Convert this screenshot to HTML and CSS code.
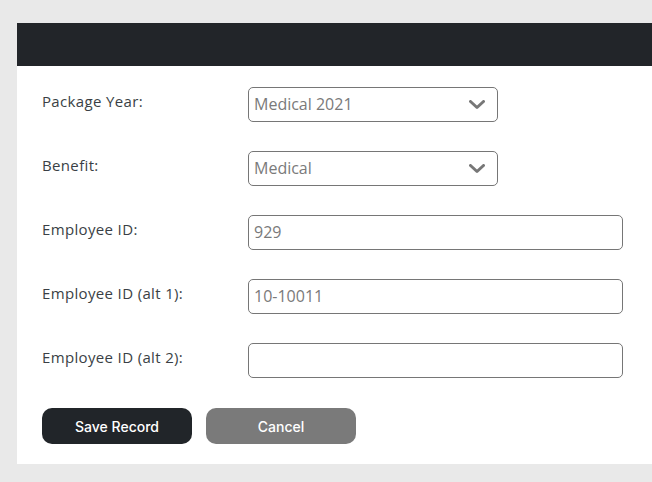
FILE: index.html
```html
<!DOCTYPE html>
<html>
<head>
<meta charset="utf-8">
<link rel="stylesheet" href="styles.css">
</head>
<body>
<div class="panel">
  <div class="panel-header"></div>
  <form class="form">
    <div class="row">
      <label class="label">Package Year:</label>
      <div class="select">
        <span class="value">Medical 2021</span>
        <svg class="chevron" width="16" height="10" viewBox="0 0 16 10"><polyline points="1.5,1.5 8,7.5 14.5,1.5" fill="none" stroke="#777" stroke-width="3" stroke-linecap="round" stroke-linejoin="round"/></svg>
      </div>
    </div>
    <div class="row">
      <label class="label">Benefit:</label>
      <div class="select">
        <span class="value">Medical</span>
        <svg class="chevron" width="16" height="10" viewBox="0 0 16 10"><polyline points="1.5,1.5 8,7.5 14.5,1.5" fill="none" stroke="#777" stroke-width="3" stroke-linecap="round" stroke-linejoin="round"/></svg>
      </div>
    </div>
    <div class="row">
      <label class="label">Employee ID:</label>
      <div class="input"><span class="value">929</span></div>
    </div>
    <div class="row">
      <label class="label">Employee ID (alt 1):</label>
      <div class="input"><span class="value">10-10011</span></div>
    </div>
    <div class="row">
      <label class="label">Employee ID (alt 2):</label>
      <div class="input"><span class="value"></span></div>
    </div>
    <div class="actions">
      <button type="button" class="btn btn-primary">Save Record</button>
      <button type="button" class="btn btn-secondary">Cancel</button>
    </div>
  </form>
</div>
</body>
</html>
```
FILE: styles.css
```css
html, body {
  margin: 0;
  padding: 0;
}
body {
  background: #e9e9e9;
  padding: 23px 0 0 17px;
  height: 482px;
  box-sizing: border-box;
  overflow: hidden;
  font-family: "Open Sans", "Liberation Sans", sans-serif;
}
.panel {
  background: #fff;
  height: 441px;
}
.panel-header {
  background: #222529;
  height: 43px;
}
.form {
  padding: 21px 0 0 25px;
  display: flex;
  flex-direction: column;
  gap: 30px;
}
.row {
  display: flex;
  align-items: flex-start;
  height: 34px;
}
.label {
  width: 206px;
  flex: none;
  font-size: 15px;
  line-height: 20px;
  letter-spacing: 0.35px;
  padding-top: 4px;
  color: #3a3f45;
}
.select, .input {
  box-sizing: border-box;
  height: 35px;
  border: 1px solid #767676;
  border-radius: 5px;
  display: flex;
  align-items: center;
  justify-content: space-between;
  padding: 0 12px 0 5px;
}
.select {
  width: 250px;
}
.input {
  width: 375px;
}
.value {
  font-size: 16px;
  color: #7a7a7a;
  padding-bottom: 1px;
}
.chevron {
  display: block;
  margin-top: 1px;
}
.actions {
  display: flex;
  gap: 14px;
  margin-top: 1px;
}
.btn {
  width: 150px;
  height: 36px;
  border: none;
  border-radius: 10px;
  color: #fff;
  font-family: Inter, Roboto, sans-serif;
  font-weight: 500;
  font-size: 14px;
  cursor: pointer;
}
.btn-primary {
  background: #212529;
}
.btn-secondary {
  background: #7a7a7a;
}
```
